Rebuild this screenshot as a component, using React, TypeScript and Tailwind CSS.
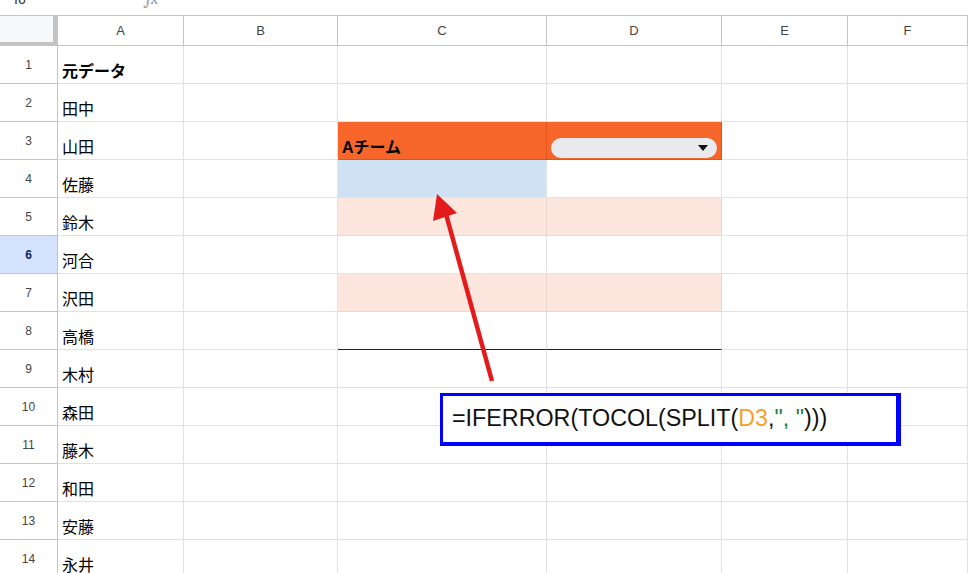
import React from "react";

// sheet data
const NAMES = [
  "元データ",
  "田中",
  "山田",
  "佐藤",
  "鈴木",
  "河合",
  "沢田",
  "高橋",
  "木村",
  "森田",
  "藤木",
  "和田",
  "安藤",
  "永井",
];

const COLS = ["A", "B", "C", "D", "E", "F"];
const GRID = "grid grid-cols-[58px_126px_154px_209px_175px_126px_1fr]";
const FONT = { fontFamily: '"Liberation Sans", "Noto Sans CJK JP", sans-serif' };

const cellFill = (row: number, col: string) => {
  if (row === 3 && (col === "C" || col === "D")) return "bg-[#f6662a] border-[#e0541c]";
  if (row === 4 && col === "C") return "bg-[#cfe2f3]";
  if ((row === 5 || row === 7) && (col === "C" || col === "D")) return "bg-[#fde6dd] border-[#ecd6cd]";
  return "";
};

const Dropdown = () => (
  <div className="flex items-center justify-end w-full h-[20px] mb-[0px] rounded-full bg-[#e8eaed] pr-[9px]">
    <svg width="10" height="6" viewBox="0 0 10 6">
      <path d="M0 0 L10 0 L5 6 Z" fill="#111" />
    </svg>
  </div>
);

const Cell = ({ row, col }: { row: number; col: string }) => {
  const underline =
    row === 8 && (col === "C" || col === "D") ? "!border-b-[#6a0000]" : "";
  let content: React.ReactNode = null;

  if (col === "A") {
    content = (
      <span className={`text-[16px] leading-[20px] text-black ${row === 1 ? "font-bold" : ""}`}>
        {NAMES[row - 1]}
      </span>
    );
  }
  if (row === 3 && col === "C") {
    content = <span className="text-[16px] leading-[20px] font-bold text-black">Aチーム</span>;
  }
  if (row === 3 && col === "D") content = <Dropdown />;

  return (
    <div
      className={`h-[38px] flex items-end px-[4px] pb-[1px] border-r border-b border-[#e2e2e2] ${cellFill(row, col)} ${underline}`}
    >
      {content}
    </div>
  );
};

const Arrow = () => (
  <svg className="absolute left-0 top-0 pointer-events-none" width="968" height="573">
    <line x1="492" y1="381" x2="446" y2="214" stroke="#e41b1b" strokeWidth="4.5" />
    <path d="M437 194 L433 221 L457 213 Z" fill="#e41b1b" />
  </svg>
);

const FormulaBox = () => (
  <div className="absolute left-[440px] top-[393px] w-[461px] h-[53px] bg-white border-[3px] border-r-[5px] border-b-[4px] border-[#0000ff] flex items-center pl-[9px]">
    <span className="text-[23.3px] leading-none text-[#111]" style={{ fontFamily: '"Liberation Sans", Arial, sans-serif' }}>
      =IFERROR(TOCOL(SPLIT(<span className="text-[#f6a02b]">D3</span>,
      <span className="text-[#188038]">", "</span>)))
    </span>
  </div>
);

export default function App() {
  return (
    <div className="relative w-[968px] h-[573px] overflow-hidden bg-white" style={FONT}>
      {/* formula bar, mostly scrolled off */}
      <div className="h-[16px] flex items-start overflow-hidden border-b border-[#c4c7c5]">
        <div className="w-[132px] h-[8px] border-r border-[#c4c7c5] pl-[14px] -mt-[11px] text-[14px] text-[#333]">I6</div>
        <div className="pl-[14px] -mt-[14px] text-[17px] italic font-serif text-[#999]">fx</div>
      </div>

      {/* column headers */}
      <div className={GRID}>
        <div className="h-[30px] bg-[#f8f9fa] border-r-[5px] border-b-[4px] border-[#c4c4c4]" />
        {COLS.map((c) => (
          <div
            key={c}
            className="h-[30px] flex items-center justify-center text-[13px] text-[#444] border-r border-b border-[#c4c4c4]"
          >
            {c}
          </div>
        ))}
      </div>

      {/* rows */}
      {NAMES.map((_, i) => {
        const row = i + 1;
        const selected = row === 6;
        return (
          <div key={row} className={GRID}>
            <div
              className={`h-[38px] flex items-center justify-center text-[12px] border-r border-b border-[#c4c4c4] ${
                selected ? "bg-[#d3e3fd] text-[#0b2a5a] font-bold" : "text-[#444]"
              }`}
            >
              {row}
            </div>
            {COLS.map((c) => (
              <Cell key={c} row={row} col={c} />
            ))}
          </div>
        );
      })}

      <Arrow />
      <FormulaBox />
    </div>
  );
}
